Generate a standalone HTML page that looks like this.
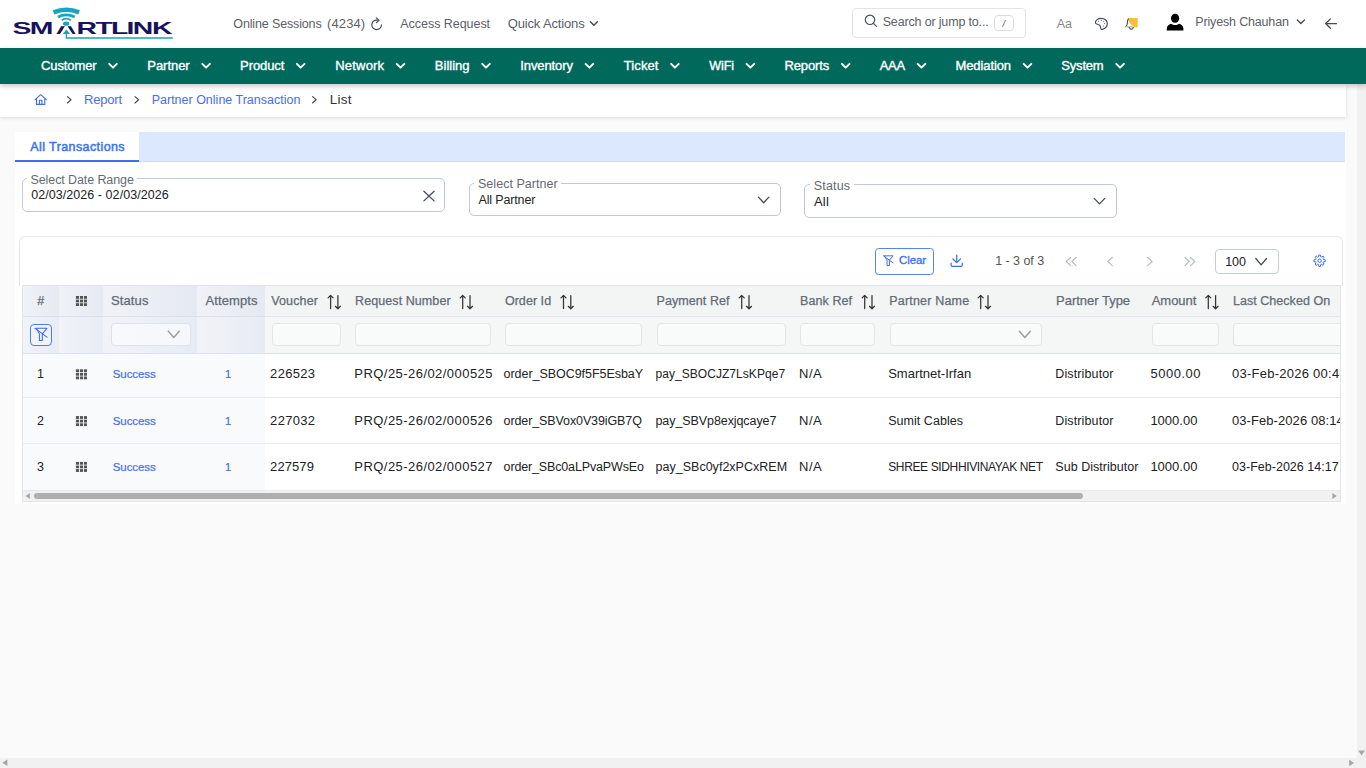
<!DOCTYPE html>
<html lang="en">
<head>
<meta charset="utf-8">
<title>Partner Online Transaction - List</title>
<style>
*{box-sizing:border-box}
html,body{margin:0;padding:0}
body{width:1366px;height:768px;overflow:hidden;position:relative;background:#fafafa;font-family:"Liberation Sans",sans-serif}
.a{position:absolute}
.t{position:absolute;white-space:pre;line-height:1;display:block}
svg{position:absolute;overflow:visible}
.inp{position:absolute;height:23.6px;top:322.8px;border:1px solid #e3e5e8;border-radius:4px;background:#f9fafa}
.fz .inp{background:rgba(250,251,253,.75);border-color:#dfe2e9}
.vb{position:absolute;width:1px;top:286px;height:67px;background:rgba(255,255,255,.45)}
</style>
</head>
<body>
<!-- top header -->
<div class="a" style="left:0;top:0;width:1366px;height:48px;background:#fff"></div>
<!--LOGO-->
<!-- search box -->
<div class="a" style="left:852px;top:8px;width:174px;height:30px;border:1px solid #e0e3e8;border-radius:4px;background:#fff"></div>
<div class="a" style="left:994.4px;top:15.4px;width:19.2px;height:15.2px;border:1px solid #dadcdf;border-radius:4px;background:#fff"></div>
<!--HEADICONS-->
<!-- nav -->
<!--NAVCHEV-->
<!-- page scrollbars -->
<div class="a" style="left:1357px;top:84px;width:9px;height:684px;background:#f1f1f1"></div>
<div class="a" style="left:0;top:758px;width:1366px;height:10px;background:#f1f1f1"></div>
<!--PAGESCROLL-->
<!-- breadcrumb -->
<div class="a" style="left:0;top:84px;width:1346px;height:32.7px;background:#fff;box-shadow:0 1px 4px rgba(0,0,0,.13)"></div>
<div class="a" style="left:0;top:48px;width:1366px;height:36px;background:#00695c;box-shadow:0 2px 5px rgba(0,0,0,.22)"></div>
<!--CRUMBICONS-->
<!-- main panel -->
<div class="a" style="left:15px;top:132px;width:1331px;height:372.4px;background:#fff"></div>
<div class="a" style="left:15px;top:132px;width:1330px;height:30px;background:#dbe8fd;border-bottom:1px solid #cfdcf2"></div>
<div class="a" style="left:15px;top:132px;width:124px;height:30px;background:#fff;border-bottom:2px solid #3b6ef0"></div>
<!-- filter fieldsets -->
<div class="a" style="left:22px;top:178px;width:423px;height:34px;border:1px solid #c3c8d2;border-radius:5px"></div>
<div class="a" style="left:27px;top:176px;width:110px;height:5px;background:#fff"></div>
<div class="a" style="left:469px;top:183px;width:312px;height:33px;border:1px solid #c3c8d2;border-radius:5px"></div>
<div class="a" style="left:474px;top:181px;width:87px;height:5px;background:#fff"></div>
<div class="a" style="left:804px;top:184px;width:313px;height:34px;border:1px solid #c3c8d2;border-radius:5px"></div>
<div class="a" style="left:810px;top:182px;width:44px;height:5px;background:#fff"></div>
<!--FILTERICONS-->
<!-- card -->
<div class="a" style="left:19px;top:236px;width:1324px;height:50px;border:1px solid #e4e7eb;border-bottom:0;border-radius:6px 6px 0 0;background:#fff"></div>
<!-- toolbar -->
<div class="a" style="left:875px;top:248px;width:58.5px;height:27px;border:1px solid #5583f3;border-radius:3.5px;background:#fff"></div>
<div class="a" style="left:1215px;top:249px;width:64px;height:25px;border:1px solid #c8ccd3;border-radius:4px;background:#fff"></div>
<!--TOOLICONS-->
<!-- table -->
<div class="a" style="left:22px;top:285px;width:1318px;height:206px;overflow:hidden">
  <div class="a" style="left:0;top:0;width:1318px;height:1px;background:#dfe2e7"></div>
  <div class="a" style="left:0;top:1px;width:1318px;height:30px;background:#f3f5f5"></div>
  <div class="a" style="left:0;top:31px;width:1318px;height:1px;background:#e2e5ea"></div>
  <div class="a" style="left:0;top:32px;width:1318px;height:36px;background:#f5f6f6"></div>
  <div class="a" style="left:0;top:68px;width:1318px;height:1px;background:#dfe2e7"></div>
  <div class="a" style="left:0;top:69px;width:1318px;height:137px;background:#fff"></div>
  <div class="a" style="left:0;top:112px;width:1318px;height:1px;background:#e8eaed"></div>
  <div class="a" style="left:0;top:158px;width:1318px;height:1px;background:#e8eaed"></div>
  <div class="a" style="left:0;top:205px;width:1318px;height:1px;background:#e8eaed"></div>
  <!-- frozen cols -->
  <div class="a" style="left:0;top:1px;width:37px;height:30px;background:linear-gradient(90deg,#eff2f7,#e6eaf2)"></div>
  <div class="a" style="left:37px;top:1px;width:44px;height:30px;background:linear-gradient(90deg,#eff2f7,#e6eaf2)"></div>
  <div class="a" style="left:81px;top:1px;width:94px;height:30px;background:linear-gradient(90deg,#f0f2f7,#e5e9f1)"></div>
  <div class="a" style="left:175px;top:1px;width:68px;height:30px;background:linear-gradient(90deg,#f0f2f7,#e5e9f1)"></div>
  <div class="a" style="left:0;top:32px;width:37px;height:36px;background:linear-gradient(90deg,#f0f3f8,#e8ecf4)"></div>
  <div class="a" style="left:37px;top:32px;width:44px;height:36px;background:linear-gradient(90deg,#f0f3f8,#e8ecf4)"></div>
  <div class="a" style="left:81px;top:32px;width:94px;height:36px;background:linear-gradient(90deg,#f1f3f8,#e7ebf3)"></div>
  <div class="a" style="left:175px;top:32px;width:68px;height:36px;background:linear-gradient(90deg,#f1f3f8,#e7ebf3)"></div>
  <div class="a" style="left:0;top:31px;width:243px;height:1px;background:#dde1ea"></div>
  <div class="a" style="left:0;top:69px;width:243px;height:43px;background:#f9fafc"></div>
  <div class="a" style="left:0;top:113px;width:243px;height:45px;background:#f9fafc"></div>
  <div class="a" style="left:0;top:159px;width:243px;height:46px;background:#f9fafc"></div>
</div>
<!-- filter inputs -->
<div class="fz">
<div class="inp" style="left:111px;width:80px"></div>
</div>
<div class="inp" style="left:272px;width:69px"></div>
<div class="inp" style="left:355px;width:136px"></div>
<div class="inp" style="left:505px;width:137px"></div>
<div class="inp" style="left:657px;width:129px"></div>
<div class="inp" style="left:800px;width:75px"></div>
<div class="inp" style="left:890px;width:152px"></div>
<div class="inp" style="left:1152px;width:67px"></div>
<div class="inp" style="left:1233px;width:107px;border-right:0;border-radius:4px 0 0 4px"></div>
<!-- filter button -->
<div class="a" style="left:30px;top:324px;width:22px;height:22px;border:1px solid #4d7cf2;border-radius:4px;background:rgba(255,255,255,.25)"></div>
<!--TABLEICONS-->
<!-- table h-scrollbar -->
<div class="a" style="left:22px;top:491px;width:1318px;height:10px;background:#f1f1f1"></div>
<div class="a" style="left:34.2px;top:492.8px;width:1049px;height:6.2px;background:#afafaf;border-radius:3.1px"></div>
<div class="a" style="left:22px;top:285px;width:1319px;height:217px;border:1px solid #e2e5ea;border-top-color:#dfe2e7"></div>
<svg width="1366" height="768" viewBox="0 0 1366 768" style="left:0;top:0;pointer-events:none"><g transform="scale(1.82,1)"><text x="6.84 16.41 30.60 41.97 52.47 61.01 69.51 72.98 83.55" y="33.9" font-family="Liberation Sans, sans-serif" font-weight="700" font-size="15.6" fill="#17125e">SMARTLINK</text></g>
<path d="M66.3 24.5L73 34.6H59.6Z" fill="#fff"/>
<rect x="61" y="20" width="11" height="6.2" fill="#fff"/>
<rect x="65.3" y="24" width="2.2" height="11" fill="#fff"/>
<ellipse cx="66.15" cy="23.7" rx="3.1" ry="2.15" fill="#18a3be"/>
<path d="M66.4 29.4L70.1 34.1H62.7Z" fill="#18a3be"/>
<path d="M66.4 34V38H172.8" fill="none" stroke="#18a3be" stroke-width="1.4"/>
<path d="M53.51 12.38A34.9 34.9 0 0 1 79.09 12.38" fill="none" stroke="#18a3be" stroke-width="4.5"/>
<path d="M57.93 17.02A18.75 18.75 0 0 1 74.67 17.02" fill="none" stroke="#18a3be" stroke-width="2.7"/>
<path d="M61.82 20.30A7.45 7.45 0 0 1 70.78 20.30" fill="none" stroke="#18a3be" stroke-width="1.8"/>
<path d="M377.43 20.17A4.8 4.8 0 1 0 381.40 24.90" fill="none" stroke="#454c57" stroke-width="1.2" stroke-linecap="round"/>
<path d="M376.3 17.9L379 20.2L376.5 22.6" fill="none" stroke="#454c57" stroke-width="1.2" stroke-linecap="round" stroke-linejoin="round"/>
<path d="M590.40 21.80L593.90 25.30L597.40 21.80" fill="none" stroke="#454c57" stroke-width="1.4" stroke-linecap="round" stroke-linejoin="round"/>
<circle cx="870" cy="19.8" r="4.7" fill="none" stroke="#454c57" stroke-width="1.15"/>
<path d="M873.4 23.3L876.5 26.4" stroke="#454c57" stroke-width="1.15" stroke-linecap="round"/>
<path d="M1101.2 18.3c-3.2 0-5.8 2-5.8 4.4 0 .9.9 1.3 2 1.5 1.6.3 2.9 1.2 3.1 2.7l.2 1.4c.1.9.9 1.4 1.7 1.1 2.9-1 4.9-3.300 4.900-6 0-2.9-2.700-5.100-6.100-5.100z" fill="none" stroke="#454c57" stroke-width="1.15" stroke-linejoin="round"/>
<circle cx="1098.6" cy="21.3" r="0.55" fill="#454c57"/>
<circle cx="1101.3" cy="20.4" r="0.55" fill="#454c57"/>
<circle cx="1103.6" cy="21.5" r="0.55" fill="#454c57"/>
<circle cx="1104.6" cy="23.6" r="0.55" fill="#454c57"/>
<circle cx="1103.5" cy="26.0" r="0.55" fill="#454c57"/>
<rect x="1128" y="18.1" width="9.7" height="9.3" fill="#fbbf2d"/>
<path d="M1128 18.1C1128.3 21.2 1129.6 24.2 1134.2 26.8L1134.2 27.6L1125.5 27.6L1127 24Z" fill="#fff"/>
<path d="M1128.3 18.9C1127.3 20.2 1127.5 22.2 1127.2 24C1127 25.2 1126.6 26 1125.9 26.7" fill="none" stroke="#454c57" stroke-width="1.1" stroke-linecap="round"/>
<path d="M1125.8 26.8H1133.2" stroke="#aeb4bd" stroke-width="1.1"/>
<path d="M1129.2 27.4C1129.6 28.6 1130.4 29.2 1131.3 29.2C1132.2 29.2 1133 28.6 1133.4 27.4" fill="none" stroke="#454c57" stroke-width="1.1" stroke-linecap="round"/>
<ellipse cx="1175.1" cy="18.2" rx="4.1" ry="4.5" fill="#000"/>
<path d="M1166.8 30.400V28.800C1166.8 26.300 1168.6 24.400 1171.1 23.700C1172.200 24.600 1173.600 25.100 1175.100 25.100C1176.600 25.100 1178 24.600 1179.100 23.700C1181.600 24.400 1183.400 26.300 1183.400 28.800V30.400Z" fill="#000"/>
<path d="M1297.30 19.90L1300.90 23.50L1304.50 19.90" fill="none" stroke="#454c57" stroke-width="1.35" stroke-linecap="round" stroke-linejoin="round"/>
<path d="M1336.5 23.5H1325.6M1330.4 18.9L1325.6 23.5L1330.4 28.3" fill="none" stroke="#454c57" stroke-width="1.25" stroke-linecap="round" stroke-linejoin="round"/>
<path d="M109.20 63.90L113.00 67.60L116.80 63.90" fill="none" stroke="#fff" stroke-width="2.0" stroke-linecap="round" stroke-linejoin="round"/>
<path d="M202.30 63.90L206.10 67.60L209.90 63.90" fill="none" stroke="#fff" stroke-width="2.0" stroke-linecap="round" stroke-linejoin="round"/>
<path d="M296.90 63.90L300.70 67.60L304.50 63.90" fill="none" stroke="#fff" stroke-width="2.0" stroke-linecap="round" stroke-linejoin="round"/>
<path d="M396.70 63.90L400.50 67.60L404.30 63.90" fill="none" stroke="#fff" stroke-width="2.0" stroke-linecap="round" stroke-linejoin="round"/>
<path d="M482.20 63.90L486.00 67.60L489.80 63.90" fill="none" stroke="#fff" stroke-width="2.0" stroke-linecap="round" stroke-linejoin="round"/>
<path d="M585.60 63.90L589.40 67.60L593.20 63.90" fill="none" stroke="#fff" stroke-width="2.0" stroke-linecap="round" stroke-linejoin="round"/>
<path d="M671.10 63.90L674.90 67.60L678.70 63.90" fill="none" stroke="#fff" stroke-width="2.0" stroke-linecap="round" stroke-linejoin="round"/>
<path d="M746.60 63.90L750.40 67.60L754.20 63.90" fill="none" stroke="#fff" stroke-width="2.0" stroke-linecap="round" stroke-linejoin="round"/>
<path d="M841.90 63.90L845.70 67.60L849.50 63.90" fill="none" stroke="#fff" stroke-width="2.0" stroke-linecap="round" stroke-linejoin="round"/>
<path d="M917.70 63.90L921.50 67.60L925.30 63.90" fill="none" stroke="#fff" stroke-width="2.0" stroke-linecap="round" stroke-linejoin="round"/>
<path d="M1023.70 63.90L1027.50 67.60L1031.30 63.90" fill="none" stroke="#fff" stroke-width="2.0" stroke-linecap="round" stroke-linejoin="round"/>
<path d="M1116.30 63.90L1120.10 67.60L1123.90 63.90" fill="none" stroke="#fff" stroke-width="2.0" stroke-linecap="round" stroke-linejoin="round"/>
<path d="M35.1 99.6L40.65 94.7L46.2 99.6M36.5 98.6V104.4H44.8V98.6M39.4 104.4V100.3H41.9V104.4" fill="none" stroke="#3c6df0" stroke-width="1.1" stroke-linecap="round" stroke-linejoin="round"/>
<path d="M67.40 96.60L71.00 99.80L67.40 103.00" fill="none" stroke="#4a4a4a" stroke-width="1.15" stroke-linecap="round" stroke-linejoin="round"/>
<path d="M135.00 96.60L138.60 99.80L135.00 103.00" fill="none" stroke="#4a4a4a" stroke-width="1.15" stroke-linecap="round" stroke-linejoin="round"/>
<path d="M312.60 96.60L316.20 99.80L312.60 103.00" fill="none" stroke="#4a4a4a" stroke-width="1.15" stroke-linecap="round" stroke-linejoin="round"/>
<path d="M423.9 191.3L434.1 200.9M434.1 191.3L423.9 200.9" stroke="#454c57" stroke-width="1.3" stroke-linecap="round"/>
<path d="M758.40 197.10L763.65 202.70L768.90 197.10" fill="none" stroke="#454c57" stroke-width="1.3" stroke-linecap="round" stroke-linejoin="round"/>
<path d="M1094.20 198.40L1099.50 203.90L1104.80 198.40" fill="none" stroke="#454c57" stroke-width="1.3" stroke-linecap="round" stroke-linejoin="round"/>
<g transform="translate(883.2,255.5) scale(0.8)" fill="none" stroke="#3c6df0" stroke-width="1.25" stroke-linecap="round" stroke-linejoin="round"><path d="M1.6 0.4H12.3L7.7 5.9V12.6H4.8V5.9Z"/><path d="M0.2 0.300L12.400 9.200"/></g>
<path d="M956.7 255.2V262.4M952.9 259L956.7 262.6L960.5 259M951.1 263V265.2C951.1 265.9 951.6 266.300 952.200 266.300H961.200C961.800 266.300 962.300 265.900 962.300 265.200V263" fill="none" stroke="#3c6df0" stroke-width="1.2" stroke-linecap="round" stroke-linejoin="round"/>
<path d="M1070.60 257.50L1066.30 261.55L1070.60 265.60" fill="none" stroke="#b9bcc1" stroke-width="1.2" stroke-linecap="round" stroke-linejoin="round"/>
<path d="M1076.20 257.50L1071.90 261.55L1076.20 265.60" fill="none" stroke="#b9bcc1" stroke-width="1.2" stroke-linecap="round" stroke-linejoin="round"/>
<path d="M1112.30 257.50L1107.80 261.55L1112.30 265.60" fill="none" stroke="#b9bcc1" stroke-width="1.2" stroke-linecap="round" stroke-linejoin="round"/>
<path d="M1147.60 257.50L1152.10 261.55L1147.60 265.60" fill="none" stroke="#b9bcc1" stroke-width="1.2" stroke-linecap="round" stroke-linejoin="round"/>
<path d="M1184.90 257.50L1189.20 261.55L1184.90 265.60" fill="none" stroke="#b9bcc1" stroke-width="1.2" stroke-linecap="round" stroke-linejoin="round"/>
<path d="M1190.50 257.50L1194.80 261.55L1190.50 265.60" fill="none" stroke="#b9bcc1" stroke-width="1.2" stroke-linecap="round" stroke-linejoin="round"/>
<path d="M1255.80 258.50L1261.15 264.90L1266.50 258.50" fill="none" stroke="#454c57" stroke-width="1.3" stroke-linecap="round" stroke-linejoin="round"/>
<path d="M1318.55 256.74L1318.75 255.06L1320.45 255.06L1320.65 256.74L1321.66 257.15L1322.98 256.11L1324.19 257.32L1323.15 258.64L1323.56 259.65L1325.24 259.85L1325.24 261.55L1323.56 261.75L1323.15 262.76L1324.19 264.08L1322.98 265.29L1321.66 264.25L1320.65 264.66L1320.45 266.34L1318.75 266.34L1318.55 264.66L1317.54 264.25L1316.22 265.29L1315.01 264.08L1316.05 262.76L1315.64 261.75L1313.96 261.55L1313.96 259.85L1315.64 259.65L1316.05 258.64L1315.01 257.32L1316.22 256.11L1317.54 257.15Z" fill="none" stroke="#3c6df0" stroke-width="1" stroke-linejoin="round"/>
<circle cx="1319.6" cy="260.7" r="1.7" fill="none" stroke="#3c6df0" stroke-width="1"/>
<path d="M330.60 308.6V295.6M328.10 297.9L330.60 295.4L333.10 297.9" fill="none" stroke="#333" stroke-width="1.25" stroke-linecap="round" stroke-linejoin="round"/>
<path d="M337.90 295.6V308.6M335.40 306.3L337.90 308.8L340.40 306.3" fill="none" stroke="#333" stroke-width="1.25" stroke-linecap="round" stroke-linejoin="round"/>
<path d="M462.70 308.6V295.6M460.20 297.9L462.70 295.4L465.20 297.9" fill="none" stroke="#333" stroke-width="1.25" stroke-linecap="round" stroke-linejoin="round"/>
<path d="M470.00 295.6V308.6M467.50 306.3L470.00 308.8L472.50 306.3" fill="none" stroke="#333" stroke-width="1.25" stroke-linecap="round" stroke-linejoin="round"/>
<path d="M563.50 308.6V295.6M561.00 297.9L563.50 295.4L566.00 297.9" fill="none" stroke="#333" stroke-width="1.25" stroke-linecap="round" stroke-linejoin="round"/>
<path d="M570.80 295.6V308.6M568.30 306.3L570.80 308.8L573.30 306.3" fill="none" stroke="#333" stroke-width="1.25" stroke-linecap="round" stroke-linejoin="round"/>
<path d="M741.70 308.6V295.6M739.20 297.9L741.70 295.4L744.20 297.9" fill="none" stroke="#333" stroke-width="1.25" stroke-linecap="round" stroke-linejoin="round"/>
<path d="M749.00 295.6V308.6M746.50 306.3L749.00 308.8L751.50 306.3" fill="none" stroke="#333" stroke-width="1.25" stroke-linecap="round" stroke-linejoin="round"/>
<path d="M864.70 308.6V295.6M862.20 297.9L864.70 295.4L867.20 297.9" fill="none" stroke="#333" stroke-width="1.25" stroke-linecap="round" stroke-linejoin="round"/>
<path d="M872.00 295.6V308.6M869.50 306.3L872.00 308.8L874.50 306.3" fill="none" stroke="#333" stroke-width="1.25" stroke-linecap="round" stroke-linejoin="round"/>
<path d="M980.70 308.6V295.6M978.20 297.9L980.70 295.4L983.20 297.9" fill="none" stroke="#333" stroke-width="1.25" stroke-linecap="round" stroke-linejoin="round"/>
<path d="M988.00 295.6V308.6M985.50 306.3L988.00 308.8L990.50 306.3" fill="none" stroke="#333" stroke-width="1.25" stroke-linecap="round" stroke-linejoin="round"/>
<path d="M1208.30 308.6V295.6M1205.80 297.9L1208.30 295.4L1210.80 297.9" fill="none" stroke="#333" stroke-width="1.25" stroke-linecap="round" stroke-linejoin="round"/>
<path d="M1215.60 295.6V308.6M1213.10 306.3L1215.60 308.8L1218.10 306.3" fill="none" stroke="#333" stroke-width="1.25" stroke-linecap="round" stroke-linejoin="round"/>
<rect x="75.90" y="296.00" width="3.1" height="2.8" fill="#555"/>
<rect x="75.90" y="299.60" width="3.1" height="2.8" fill="#555"/>
<rect x="75.90" y="303.20" width="3.1" height="2.8" fill="#555"/>
<rect x="79.90" y="296.00" width="3.1" height="2.8" fill="#555"/>
<rect x="79.90" y="299.60" width="3.1" height="2.8" fill="#555"/>
<rect x="79.90" y="303.20" width="3.1" height="2.8" fill="#555"/>
<rect x="83.90" y="296.00" width="3.1" height="2.8" fill="#555"/>
<rect x="83.90" y="299.60" width="3.1" height="2.8" fill="#555"/>
<rect x="83.90" y="303.20" width="3.1" height="2.8" fill="#555"/>
<rect x="75.90" y="369.30" width="3.1" height="2.8" fill="#555"/>
<rect x="75.90" y="372.90" width="3.1" height="2.8" fill="#555"/>
<rect x="75.90" y="376.50" width="3.1" height="2.8" fill="#555"/>
<rect x="79.90" y="369.30" width="3.1" height="2.8" fill="#555"/>
<rect x="79.90" y="372.90" width="3.1" height="2.8" fill="#555"/>
<rect x="79.90" y="376.50" width="3.1" height="2.8" fill="#555"/>
<rect x="83.90" y="369.30" width="3.1" height="2.8" fill="#555"/>
<rect x="83.90" y="372.90" width="3.1" height="2.8" fill="#555"/>
<rect x="83.90" y="376.50" width="3.1" height="2.8" fill="#555"/>
<rect x="75.90" y="416.10" width="3.1" height="2.8" fill="#555"/>
<rect x="75.90" y="419.70" width="3.1" height="2.8" fill="#555"/>
<rect x="75.90" y="423.30" width="3.1" height="2.8" fill="#555"/>
<rect x="79.90" y="416.10" width="3.1" height="2.8" fill="#555"/>
<rect x="79.90" y="419.70" width="3.1" height="2.8" fill="#555"/>
<rect x="79.90" y="423.30" width="3.1" height="2.8" fill="#555"/>
<rect x="83.90" y="416.10" width="3.1" height="2.8" fill="#555"/>
<rect x="83.90" y="419.70" width="3.1" height="2.8" fill="#555"/>
<rect x="83.90" y="423.30" width="3.1" height="2.8" fill="#555"/>
<rect x="75.90" y="461.90" width="3.1" height="2.8" fill="#555"/>
<rect x="75.90" y="465.50" width="3.1" height="2.8" fill="#555"/>
<rect x="75.90" y="469.10" width="3.1" height="2.8" fill="#555"/>
<rect x="79.90" y="461.90" width="3.1" height="2.8" fill="#555"/>
<rect x="79.90" y="465.50" width="3.1" height="2.8" fill="#555"/>
<rect x="79.90" y="469.10" width="3.1" height="2.8" fill="#555"/>
<rect x="83.90" y="461.90" width="3.1" height="2.8" fill="#555"/>
<rect x="83.90" y="465.50" width="3.1" height="2.8" fill="#555"/>
<rect x="83.90" y="469.10" width="3.1" height="2.8" fill="#555"/>
<g transform="translate(34.6,327.9) scale(1.0)" fill="none" stroke="#3c6df0" stroke-width="1.05" stroke-linecap="round" stroke-linejoin="round"><path d="M1.6 0.4H12.3L7.7 5.9V12.6H4.8V5.9Z"/><path d="M0.2 0.300L12.400 9.200"/></g>
<path d="M168.30 331.20L173.80 337.40L179.30 331.20" fill="none" stroke="#9a9ea5" stroke-width="1.5" stroke-linecap="round" stroke-linejoin="round"/>
<path d="M1019.30 331.20L1024.80 337.40L1030.30 331.20" fill="none" stroke="#9a9ea5" stroke-width="1.5" stroke-linecap="round" stroke-linejoin="round"/>
<path d="M25.6 496L29.900 492.900V499.100Z" fill="#a6a6a6"/>
<path d="M1336.8 496L1332.400 492.900V499.100Z" fill="#a6a6a6"/>
<path d="M2.3 762.7L7.400 759.400V766Z" fill="#a6a6a6"/>
<path d="M1354.2 762.9L1349.100 759.700V766.100Z" fill="#a6a6a6"/>
<path d="M1361.6 755.5L1358.300 750.500H1364.900Z" fill="#a6a6a6"/></svg>
<span class="t" style="left:233.30px;top:18.00px;font-size:12.5px;color:#5c6066;letter-spacing:-0.139px;">Online Sessions</span>
<span class="t" style="left:327.10px;top:17.00px;font-size:13px;color:#5c6066;letter-spacing:0.084px;">(4234)</span>
<span class="t" style="left:400.30px;top:18.00px;font-size:12.5px;color:#5c6066;letter-spacing:-0.040px;">Access Request</span>
<span class="t" style="left:507.70px;top:17.00px;font-size:13px;color:#5c6066;letter-spacing:-0.147px;">Quick Actions</span>
<span class="t" style="left:882.70px;top:16.00px;font-size:12.5px;color:#5c6066;letter-spacing:-0.163px;">Search or jump to...</span>
<span class="t" style="left:1002.40px;top:19.00px;font-size:9.5px;color:#555;font-style:italic;">/</span>
<span class="t" style="left:1056.80px;top:18.00px;font-size:12.5px;color:#85888d;letter-spacing:-0.099px;">Aa</span>
<span class="t" style="left:1195.30px;top:16.00px;font-size:12.5px;color:#5c6066;letter-spacing:-0.164px;">Priyesh Chauhan</span>
<span class="t" style="left:41.00px;top:59.00px;font-size:13px;color:#fff;letter-spacing:-0.108px;-webkit-text-stroke:0.35px #fff;">Customer</span>
<span class="t" style="left:147.30px;top:59.00px;font-size:13px;color:#fff;letter-spacing:-0.040px;-webkit-text-stroke:0.35px #fff;">Partner</span>
<span class="t" style="left:240.10px;top:59.00px;font-size:13px;color:#fff;letter-spacing:-0.102px;-webkit-text-stroke:0.35px #fff;">Product</span>
<span class="t" style="left:335.30px;top:59.00px;font-size:13px;color:#fff;letter-spacing:0.185px;-webkit-text-stroke:0.35px #fff;">Network</span>
<span class="t" style="left:434.80px;top:59.00px;font-size:13px;color:#fff;letter-spacing:0.019px;-webkit-text-stroke:0.35px #fff;">Billing</span>
<span class="t" style="left:520.30px;top:59.00px;font-size:13px;color:#fff;letter-spacing:-0.098px;-webkit-text-stroke:0.35px #fff;">Inventory</span>
<span class="t" style="left:623.70px;top:59.00px;font-size:13px;color:#fff;letter-spacing:0.119px;-webkit-text-stroke:0.35px #fff;">Ticket</span>
<span class="t" style="left:709.20px;top:60.00px;font-size:12.5px;color:#fff;letter-spacing:-0.067px;-webkit-text-stroke:0.35px #fff;">WiFi</span>
<span class="t" style="left:784.50px;top:59.00px;font-size:13px;color:#fff;letter-spacing:-0.122px;-webkit-text-stroke:0.35px #fff;">Reports</span>
<span class="t" style="left:879.70px;top:59.00px;font-size:13px;color:#fff;letter-spacing:-0.308px;-webkit-text-stroke:0.35px #fff;">AAA</span>
<span class="t" style="left:955.50px;top:59.00px;font-size:13px;color:#fff;letter-spacing:-0.097px;-webkit-text-stroke:0.35px #fff;">Mediation</span>
<span class="t" style="left:1061.30px;top:59.00px;font-size:13px;color:#fff;letter-spacing:-0.189px;-webkit-text-stroke:0.35px #fff;">System</span>
<span class="t" style="left:84.00px;top:93.00px;font-size:13px;color:#466eee;letter-spacing:-0.206px;">Report</span>
<span class="t" style="left:151.70px;top:94.00px;font-size:12.5px;color:#466eee;">Partner Online Transaction</span>
<span class="t" style="left:329.70px;top:93.00px;font-size:13.5px;color:#333;letter-spacing:0.296px;">List</span>
<span class="t" style="left:30.30px;top:141.00px;font-size:12.5px;color:#3b74f2;letter-spacing:0.405px;-webkit-text-stroke:0.5px #3b74f2;">All Transactions</span>
<span class="t" style="left:30.50px;top:174.00px;font-size:12.5px;color:#666a70;letter-spacing:-0.096px;">Select Date Range</span>
<span class="t" style="left:31.20px;top:189.00px;font-size:12.5px;color:#222;letter-spacing:0.058px;">02/03/2026 - 02/03/2026</span>
<span class="t" style="left:478.00px;top:178.00px;font-size:12.5px;color:#666a70;letter-spacing:0.037px;">Select Partner</span>
<span class="t" style="left:478.50px;top:194.00px;font-size:12.5px;color:#222;letter-spacing:-0.146px;">All Partner</span>
<span class="t" style="left:813.80px;top:180.00px;font-size:12.5px;color:#666a70;letter-spacing:0.152px;">Status</span>
<span class="t" style="left:814.00px;top:195.00px;font-size:13.0px;color:#222;letter-spacing:0.169px;">All</span>
<span class="t" style="left:898.90px;top:255.00px;font-size:11.5px;color:#3a6cf2;letter-spacing:-0.048px;-webkit-text-stroke:0.3px #3a6cf2;">Clear</span>
<span class="t" style="left:995.20px;top:255.00px;font-size:12.5px;color:#555;letter-spacing:-0.049px;">1 - 3 of 3</span>
<span class="t" style="left:1225.20px;top:256.00px;font-size:12.5px;color:#222;letter-spacing:-0.030px;">100</span>
<span class="t" style="left:37.20px;top:295.00px;font-size:12.5px;color:#636a75;-webkit-text-stroke:0.25px #636a75;">#</span>
<span class="t" style="left:110.90px;top:294.00px;font-size:13.0px;color:#636a75;letter-spacing:0.129px;-webkit-text-stroke:0.25px #636a75;">Status</span>
<span class="t" style="left:205.40px;top:294.00px;font-size:13.0px;color:#636a75;letter-spacing:0.128px;-webkit-text-stroke:0.25px #636a75;">Attempts</span>
<span class="t" style="left:271.20px;top:295.00px;font-size:12.5px;color:#636a75;letter-spacing:0.138px;-webkit-text-stroke:0.25px #636a75;">Voucher</span>
<span class="t" style="left:355.10px;top:295.00px;font-size:12.5px;color:#636a75;letter-spacing:0.077px;-webkit-text-stroke:0.25px #636a75;">Request Number</span>
<span class="t" style="left:504.90px;top:295.00px;font-size:12.5px;color:#636a75;letter-spacing:0.049px;-webkit-text-stroke:0.25px #636a75;">Order Id</span>
<span class="t" style="left:656.50px;top:295.00px;font-size:12.5px;color:#636a75;letter-spacing:0.083px;-webkit-text-stroke:0.25px #636a75;">Payment Ref</span>
<span class="t" style="left:800.10px;top:295.00px;font-size:12.5px;color:#636a75;letter-spacing:0.068px;-webkit-text-stroke:0.25px #636a75;">Bank Ref</span>
<span class="t" style="left:889.30px;top:295.00px;font-size:12.5px;color:#636a75;letter-spacing:0.181px;-webkit-text-stroke:0.25px #636a75;">Partner Name</span>
<span class="t" style="left:1056.00px;top:294.00px;font-size:13.0px;color:#636a75;letter-spacing:-0.009px;-webkit-text-stroke:0.25px #636a75;">Partner Type</span>
<span class="t" style="left:1151.70px;top:294.00px;font-size:13.0px;color:#636a75;letter-spacing:-0.024px;-webkit-text-stroke:0.25px #636a75;">Amount</span>
<span class="t" style="left:1233.00px;top:295.00px;font-size:12.5px;color:#636a75;letter-spacing:0.036px;-webkit-text-stroke:0.25px #636a75;">Last Checked On</span>
<span class="t" style="left:37.10px;top:368.00px;font-size:12.5px;color:#222;">1</span>
<span class="t" style="left:112.80px;top:369.00px;font-size:11.5px;color:#466eee;letter-spacing:-0.095px;-webkit-text-stroke:0.2px #466eee;">Success</span>
<span class="t" style="left:224.90px;top:369.00px;font-size:11px;color:#466eee;-webkit-text-stroke:0.2px #466eee;">1</span>
<span class="t" style="left:270.10px;top:367.00px;font-size:13.0px;color:#222;letter-spacing:0.322px;">226523</span>
<span class="t" style="left:354.30px;top:367.00px;font-size:13.0px;color:#222;letter-spacing:0.450px;">PRQ/25-26/02/000525</span>
<span class="t" style="left:503.60px;top:368.00px;font-size:12.5px;color:#222;letter-spacing:-0.045px;">order_SBOC9f5F5EsbaY</span>
<span class="t" style="left:655.50px;top:368.00px;font-size:12.0px;color:#222;letter-spacing:0.050px;">pay_SBOCJZ7LsKPqe7</span>
<span class="t" style="left:799.10px;top:367.00px;font-size:13.0px;color:#222;letter-spacing:0.461px;">N/A</span>
<span class="t" style="left:888.20px;top:367.00px;font-size:13.0px;color:#222;letter-spacing:-0.007px;">Smartnet-Irfan</span>
<span class="t" style="left:1055.30px;top:368.00px;font-size:12.5px;color:#222;letter-spacing:0.123px;">Distributor</span>
<span class="t" style="left:1150.40px;top:367.00px;font-size:13.0px;color:#222;letter-spacing:0.534px;">5000.00</span>
<span class="t" style="left:1232.00px;top:367.00px;font-size:13.0px;color:#222;letter-spacing:0.256px;width:108.0px;overflow:hidden;">03-Feb-2026 00:40</span>
<span class="t" style="left:37.10px;top:415.00px;font-size:12.5px;color:#222;">2</span>
<span class="t" style="left:112.80px;top:416.00px;font-size:11.5px;color:#466eee;letter-spacing:-0.095px;-webkit-text-stroke:0.2px #466eee;">Success</span>
<span class="t" style="left:224.90px;top:416.00px;font-size:11px;color:#466eee;-webkit-text-stroke:0.2px #466eee;">1</span>
<span class="t" style="left:270.10px;top:414.00px;font-size:13.0px;color:#222;letter-spacing:0.322px;">227032</span>
<span class="t" style="left:354.30px;top:414.00px;font-size:13.0px;color:#222;letter-spacing:0.450px;">PRQ/25-26/02/000526</span>
<span class="t" style="left:503.60px;top:415.00px;font-size:12.5px;color:#222;letter-spacing:-0.109px;">order_SBVox0V39iGB7Q</span>
<span class="t" style="left:655.50px;top:415.00px;font-size:12.5px;color:#222;letter-spacing:-0.083px;">pay_SBVp8exjqcaye7</span>
<span class="t" style="left:799.10px;top:414.00px;font-size:13.0px;color:#222;letter-spacing:0.461px;">N/A</span>
<span class="t" style="left:888.20px;top:415.00px;font-size:12.5px;color:#222;letter-spacing:0.041px;">Sumit Cables</span>
<span class="t" style="left:1055.30px;top:415.00px;font-size:12.5px;color:#222;letter-spacing:0.123px;">Distributor</span>
<span class="t" style="left:1150.40px;top:414.00px;font-size:13.0px;color:#222;">1000.00</span>
<span class="t" style="left:1232.00px;top:414.00px;font-size:13.0px;color:#222;letter-spacing:0.069px;width:108.0px;overflow:hidden;">03-Feb-2026 08:14</span>
<span class="t" style="left:37.10px;top:461.00px;font-size:12.5px;color:#222;">3</span>
<span class="t" style="left:112.80px;top:462.00px;font-size:11.5px;color:#466eee;letter-spacing:-0.095px;-webkit-text-stroke:0.2px #466eee;">Success</span>
<span class="t" style="left:224.90px;top:462.00px;font-size:11px;color:#466eee;-webkit-text-stroke:0.2px #466eee;">1</span>
<span class="t" style="left:270.10px;top:460.00px;font-size:13.0px;color:#222;letter-spacing:0.082px;">227579</span>
<span class="t" style="left:354.30px;top:460.00px;font-size:13.0px;color:#222;letter-spacing:0.450px;">PRQ/25-26/02/000527</span>
<span class="t" style="left:503.60px;top:461.00px;font-size:12.5px;color:#222;letter-spacing:-0.150px;">order_SBc0aLPvaPWsEo</span>
<span class="t" style="left:655.50px;top:461.00px;font-size:12.5px;color:#222;letter-spacing:0.017px;">pay_SBc0yf2xPCxREM</span>
<span class="t" style="left:799.10px;top:460.00px;font-size:13.0px;color:#222;letter-spacing:0.461px;">N/A</span>
<span class="t" style="left:888.20px;top:461.00px;font-size:12.0px;color:#222;letter-spacing:-0.365px;">SHREE SIDHHIVINAYAK NET</span>
<span class="t" style="left:1055.30px;top:461.00px;font-size:12.5px;color:#222;letter-spacing:0.029px;">Sub Distributor</span>
<span class="t" style="left:1150.40px;top:460.00px;font-size:13.0px;color:#222;">1000.00</span>
<span class="t" style="left:1232.00px;top:461.00px;font-size:12.5px;color:#222;letter-spacing:0.022px;width:108.0px;overflow:hidden;">03-Feb-2026 14:17</span>
</body>
</html>
